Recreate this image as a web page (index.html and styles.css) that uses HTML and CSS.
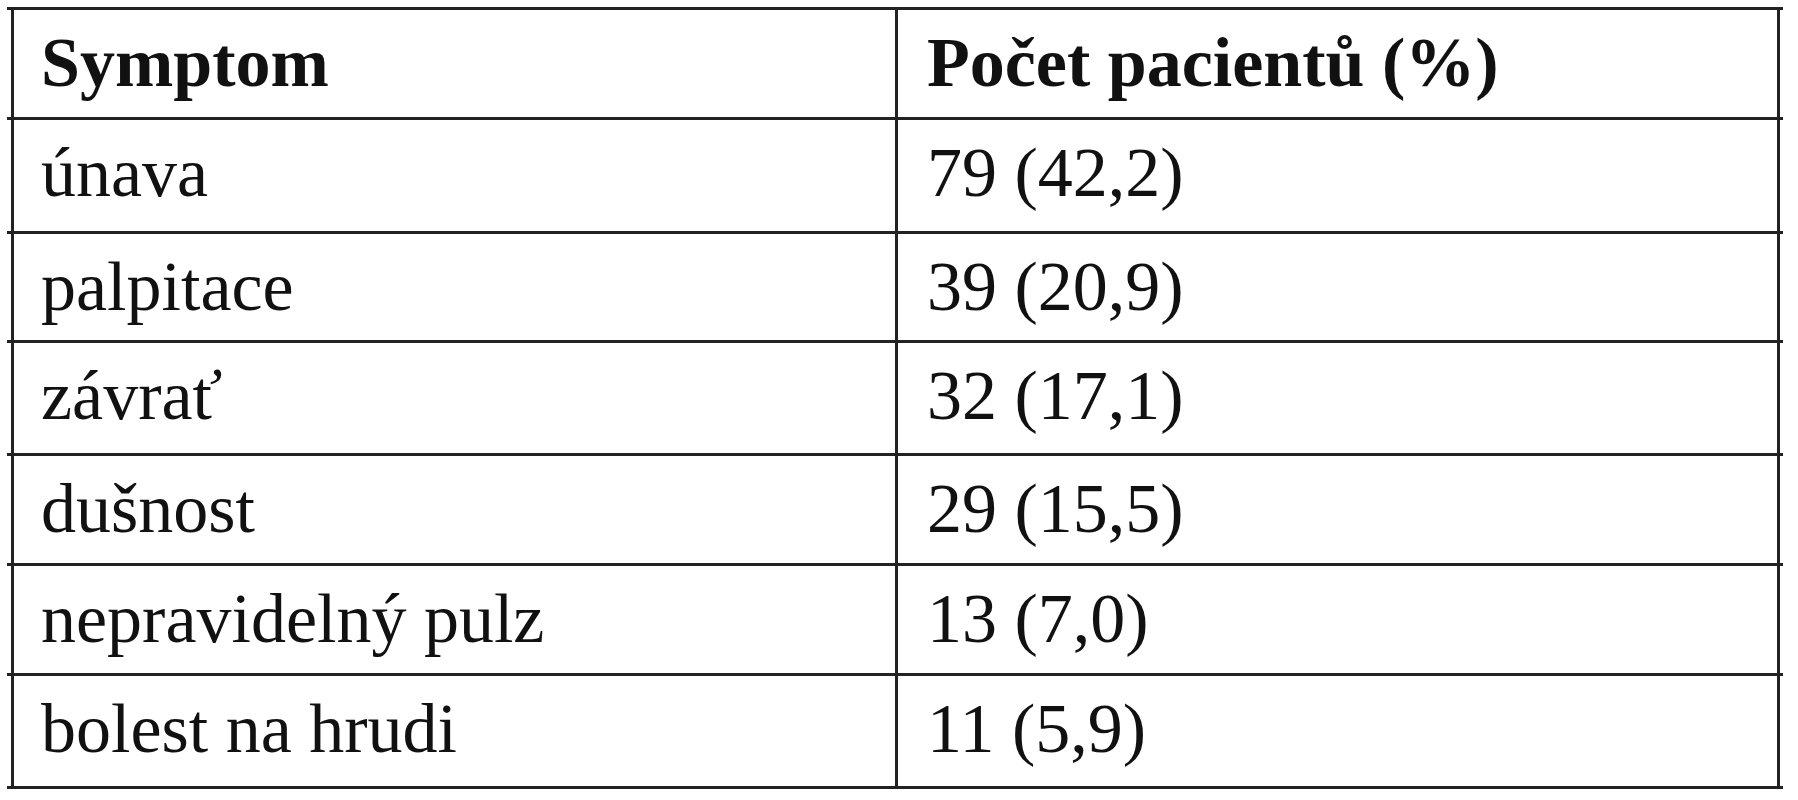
FILE: index.html
```html
<!DOCTYPE html>
<html lang="cs">
<head>
<meta charset="utf-8">
<title>Symptomy</title>
<link rel="stylesheet" href="styles.css">
</head>
<body>
<div class="table">
  <div class="row head">
    <div class="cell c1">Symptom</div>
    <div class="cell c2">Počet pacientů (%)</div>
  </div>
  <div class="row tall">
    <div class="cell c1">únava</div>
    <div class="cell c2">79 (42,2)</div>
  </div>
  <div class="row short">
    <div class="cell c1">palpitace</div>
    <div class="cell c2">39 (20,9)</div>
  </div>
  <div class="row mid">
    <div class="cell c1">závrať</div>
    <div class="cell c2">32 (17,1)</div>
  </div>
  <div class="row">
    <div class="cell c1">dušnost</div>
    <div class="cell c2">29 (15,5)</div>
  </div>
  <div class="row">
    <div class="cell c1">nepravidelný pulz</div>
    <div class="cell c2">13 (7,0)</div>
  </div>
  <div class="row mid last">
    <div class="cell c1">bolest na hrudi</div>
    <div class="cell c2">11 (5,9)</div>
  </div>
</div>
</body>
</html>
```

FILE: styles.css
```css
html, body {
  margin: 0;
  padding: 0;
  background: #ffffff;
}

body {
  font-family: "Liberation Serif", "Times New Roman", serif;
  font-size: 70px;
  color: #111111;
}

.table {
  width: 1776px;
  margin: 7px 0 0 7px;
  display: flex;
  flex-direction: column;
}

.row {
  display: grid;
  grid-template-columns: 884px 885px;
  padding: 0 3px 0 4px;
  height: 107px;
  border-top: 3px solid #222222;
}

.row.tall {
  height: 111px;
}

.row.short {
  height: 106px;
}

.row.mid {
  height: 110px;
}

.row.last {
  border-bottom: 3px solid #222222;
}

.cell {
  border-left: 3px solid #222222;
  padding-top: 13px;
  line-height: 80px;
  white-space: nowrap;
}

.c1 {
  padding-left: 27px;
}

.c2 {
  padding-left: 29px;
  border-right: 3px solid #222222;
}

.head .cell {
  font-weight: bold;
}
```
